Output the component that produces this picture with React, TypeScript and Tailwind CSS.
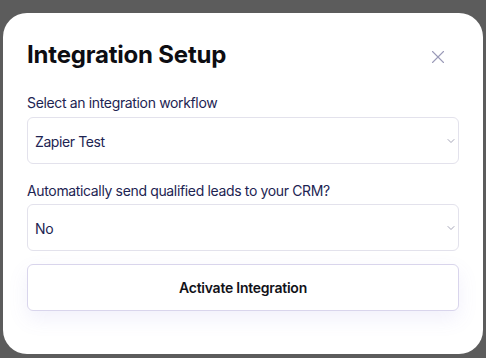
import { X, ChevronDown } from 'lucide-react';

function SelectBox({ value }: { value: string }) {
  return (
    <div className="h-[47px] w-full rounded-md border border-[#e3e2ec] bg-white pl-[7px] pr-[1px] flex items-center justify-between">
      <span className="text-[14px] tracking-[-0.4px] text-[#1d2452] mt-[1px]">{value}</span>
      <ChevronDown size={12} strokeWidth={1.6} className="text-[#8f8fa6]" />
    </div>
  );
}

export default function App() {
  return (
    <div className="h-[358px] w-[486px] bg-[#5c5c5c] pt-[13px] pl-[3px]" style={{ fontFamily: 'Inter, "Noto Sans", sans-serif' }}>
      <div className="w-[480px] h-[341px] bg-white rounded-[24px] px-6 pt-[26px]">
        {/* Header */}
        <div className="flex items-center justify-between h-8">
          <h1 className="text-[24px] font-bold text-[#0d0d12] tracking-[-0.2px]">Integration Setup</h1>
          <X size={22} strokeWidth={1.2} className="text-[#9b9bb8] mr-[10px] mt-[3px]" />
        </div>

        <div className="mt-[22px] flex flex-col">
          <label className="text-[14px] leading-5 tracking-[-0.35px] text-[#1d2452] mb-1">Select an integration workflow</label>
          <SelectBox value="Zapier Test" />

          <label className="text-[14px] leading-5 tracking-[-0.35px] text-[#1d2452] mt-[17px] mb-[3px]">
            Automatically send qualified leads to your CRM?
          </label>
          <SelectBox value="No" />

          <button className="mt-[13px] h-[47px] w-full rounded-md border border-[#d9d5ec] bg-white text-[14px] font-semibold tracking-[-0.25px] text-[#121218] shadow-[0_8px_20px_rgba(120,110,220,0.10)]">
            Activate Integration
          </button>
        </div>
      </div>
    </div>
  );
}
